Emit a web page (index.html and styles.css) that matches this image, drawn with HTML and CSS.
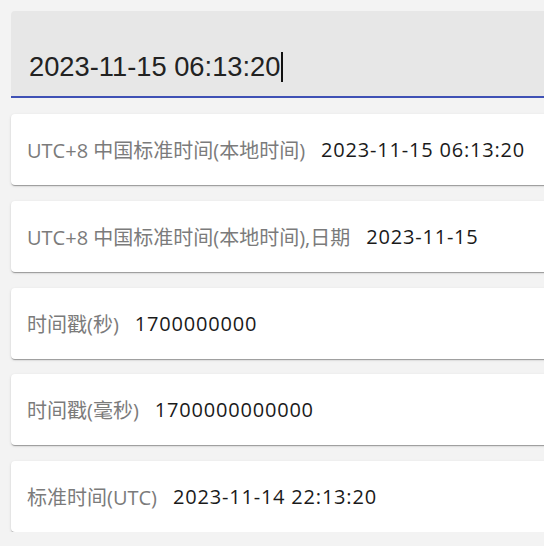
FILE: index.html
```html
<!DOCTYPE html>
<html lang="zh-CN">
<head>
<meta charset="utf-8">
<title>时间戳转换</title>
<link rel="stylesheet" href="styles.css">
</head>
<body>
<div class="app">
  <div class="field">
    <span class="field-text">2023-11-15 06:13:20</span><span class="caret"></span>
  </div>
  <div class="list">
    <div class="card"><span class="label">UTC+8 中国标准时间(本地时间)</span><span class="value">2023-11-15 06:13:20</span></div>
    <div class="card"><span class="label">UTC+8 中国标准时间(本地时间),日期</span><span class="value">2023-11-15</span></div>
    <div class="card"><span class="label">时间戳(秒)</span><span class="value">1700000000</span></div>
    <div class="card"><span class="label">时间戳(毫秒)</span><span class="value">1700000000000</span></div>
    <div class="card"><span class="label">标准时间(UTC)</span><span class="value">2023-11-14 22:13:20</span></div>
  </div>
</div>
</body>
</html>
```
FILE: styles.css
```css
html, body {
  margin: 0;
  padding: 0;
  overflow: hidden;
  background: #f3f3f3;
}
.app {
  width: 580px;
  padding: 11px 0 0 11px;
  display: flex;
  flex-direction: column;
  gap: 16px;
}
.field {
  background: #e7e7e7;
  border-radius: 4px 4px 0 0;
  border-bottom: 2px solid #3f51b5;
  display: flex;
  align-items: flex-end;
  padding: 0 18px 14px;
  box-sizing: content-box;
  height: 71px;
}
.field-text {
  font-family: "Liberation Sans", Arial, sans-serif;
  font-size: 27.3px;
  line-height: 30px;
  color: #222;
}
.caret {
  display: inline-block;
  width: 2px;
  height: 30px;
  background: #111;
  margin-left: 1px;
}
.list {
  display: flex;
  flex-direction: column;
  gap: 15.75px;
}
.card {
  height: 71px;
  background: #fff;
  border-radius: 4px;
  box-shadow: 0 2px 1px -1px rgba(0,0,0,.2), 0 1px 1px 0 rgba(0,0,0,.14), 0 1px 3px 0 rgba(0,0,0,.12);
  display: flex;
  align-items: center;
  gap: 16px;
  padding: 0 16px;
  font-family: "Open Sans", "Noto Sans CJK SC", sans-serif;
  font-size: 20px;
}
.label {
  color: #7b7b7b;
}
.value {
  color: #1a1a1a;
  letter-spacing: 0.8px;
}
```
